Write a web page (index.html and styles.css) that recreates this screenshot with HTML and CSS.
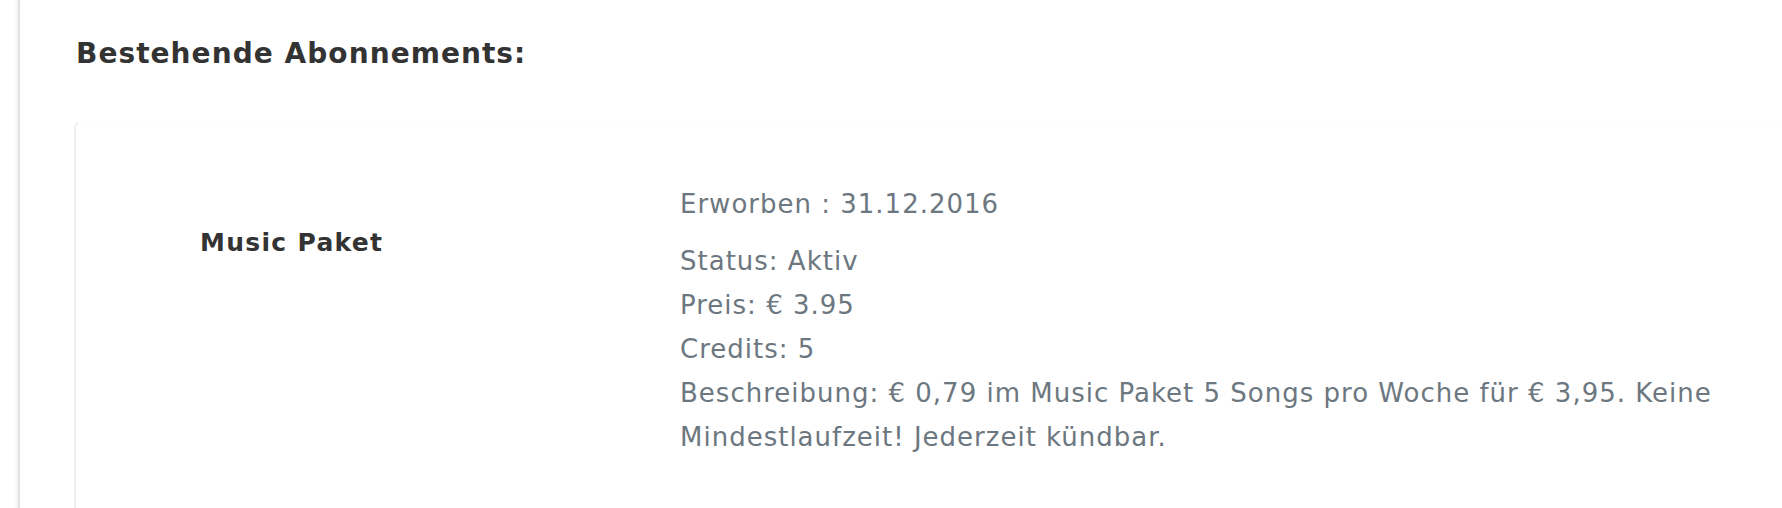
FILE: index.html
```html
<!DOCTYPE html>
<html lang="de">
<head>
<meta charset="utf-8">
<title>Bestehende Abonnements</title>
<link rel="stylesheet" href="styles.css">
</head>
<body>
<div class="page">
  <main class="panel">
    <h2 class="title">Bestehende Abonnements:</h2>
    <section class="card">
      <div class="card-name">Music Paket</div>
      <div class="card-info">
        <p class="acquired">Erworben : 31.12.2016</p>
        <p class="details">Status: Aktiv<br>Preis: € 3.95<br>Credits: 5<br>Beschreibung: € 0,79 im Music Paket 5 Songs pro Woche für € 3,95. Keine Mindestlaufzeit! Jederzeit kündbar.</p>
      </div>
    </section>
  </main>
</div>
</body>
</html>
```
FILE: styles.css
```css
html, body {
  margin: 0;
  padding: 0;
  background: #ffffff;
}
body {
  font-family: "DejaVu Sans", Verdana, sans-serif;
  color: #333333;
  overflow: hidden;
}
.page {
  display: flex;
  min-height: 508px;
}
.panel {
  flex: 1;
  margin-left: 18px;
  border-left: 2px solid #e2e2e2;
  box-shadow: -2px 0 3px rgba(0, 0, 0, 0.06);
  padding: 37px 0 0 56px;
}
.title {
  margin: 0;
  font-size: 28px;
  line-height: 34px;
  font-weight: bold;
  letter-spacing: 1.05px;
  color: #333333;
}
.card {
  margin: 49px 0 0 -2px;
  min-height: 420px;
  border-left: 2px solid #eeeeee;
  border-top: 1px solid #fcfcfc;
  border-top-left-radius: 9px;
  display: grid;
  grid-template-columns: 604px 1100px;
  padding-top: 61px;
}
.card-name {
  padding: 46px 0 0 124px;
  font-size: 25px;
  line-height: 30px;
  font-weight: bold;
  letter-spacing: 1.3px;
  color: #333333;
}
.card-info {
  font-size: 26px;
  line-height: 44px;
  letter-spacing: 1px;
  color: #6c7780;
}
.acquired {
  margin: 0 0 13px;
}
.details {
  margin: 0;
}
```
